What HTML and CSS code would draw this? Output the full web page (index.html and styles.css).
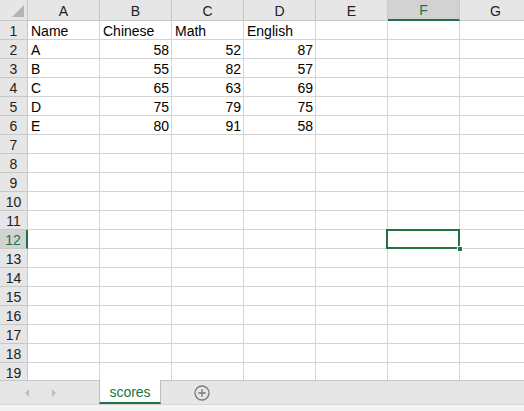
FILE: index.html
```html
<!DOCTYPE html>
<html>
<head>
<meta charset="utf-8">
<link rel="stylesheet" href="styles.css">
</head>
<body>
<div class="app">
  <div class="sheet">
    <div class="grid">
      <div class="corner"><span class="tri"></span></div>
      <div class="ch">A</div><div class="ch">B</div><div class="ch">C</div><div class="ch">D</div><div class="ch">E</div><div class="ch sel">F</div><div class="ch">G</div>

      <div class="rh">1</div><div class="c">Name</div><div class="c">Chinese</div><div class="c">Math</div><div class="c">English</div><div class="c"></div><div class="c"></div><div class="c"></div>
      <div class="rh">2</div><div class="c">A</div><div class="c n">58</div><div class="c n">52</div><div class="c n">87</div><div class="c"></div><div class="c"></div><div class="c"></div>
      <div class="rh">3</div><div class="c">B</div><div class="c n">55</div><div class="c n">82</div><div class="c n">57</div><div class="c"></div><div class="c"></div><div class="c"></div>
      <div class="rh">4</div><div class="c">C</div><div class="c n">65</div><div class="c n">63</div><div class="c n">69</div><div class="c"></div><div class="c"></div><div class="c"></div>
      <div class="rh">5</div><div class="c">D</div><div class="c n">75</div><div class="c n">79</div><div class="c n">75</div><div class="c"></div><div class="c"></div><div class="c"></div>
      <div class="rh">6</div><div class="c">E</div><div class="c n">80</div><div class="c n">91</div><div class="c n">58</div><div class="c"></div><div class="c"></div><div class="c"></div>
      <div class="rh">7</div><div class="c"></div><div class="c"></div><div class="c"></div><div class="c"></div><div class="c"></div><div class="c"></div><div class="c"></div>
      <div class="rh">8</div><div class="c"></div><div class="c"></div><div class="c"></div><div class="c"></div><div class="c"></div><div class="c"></div><div class="c"></div>
      <div class="rh">9</div><div class="c"></div><div class="c"></div><div class="c"></div><div class="c"></div><div class="c"></div><div class="c"></div><div class="c"></div>
      <div class="rh">10</div><div class="c"></div><div class="c"></div><div class="c"></div><div class="c"></div><div class="c"></div><div class="c"></div><div class="c"></div>
      <div class="rh">11</div><div class="c"></div><div class="c"></div><div class="c"></div><div class="c"></div><div class="c"></div><div class="c"></div><div class="c"></div>
      <div class="rh sel">12</div><div class="c"></div><div class="c"></div><div class="c"></div><div class="c"></div><div class="c"></div><div class="c active"><span class="handle"></span></div><div class="c"></div>
      <div class="rh">13</div><div class="c"></div><div class="c"></div><div class="c"></div><div class="c"></div><div class="c"></div><div class="c"></div><div class="c"></div>
      <div class="rh">14</div><div class="c"></div><div class="c"></div><div class="c"></div><div class="c"></div><div class="c"></div><div class="c"></div><div class="c"></div>
      <div class="rh">15</div><div class="c"></div><div class="c"></div><div class="c"></div><div class="c"></div><div class="c"></div><div class="c"></div><div class="c"></div>
      <div class="rh">16</div><div class="c"></div><div class="c"></div><div class="c"></div><div class="c"></div><div class="c"></div><div class="c"></div><div class="c"></div>
      <div class="rh">17</div><div class="c"></div><div class="c"></div><div class="c"></div><div class="c"></div><div class="c"></div><div class="c"></div><div class="c"></div>
      <div class="rh">18</div><div class="c"></div><div class="c"></div><div class="c"></div><div class="c"></div><div class="c"></div><div class="c"></div><div class="c"></div>
      <div class="rh">19</div><div class="c"></div><div class="c"></div><div class="c"></div><div class="c"></div><div class="c"></div><div class="c"></div><div class="c"></div>
    </div>
  </div>
  <div class="tabbar">
    <div class="navs">
      <span class="arrow left"></span>
      <span class="arrow right"></span>
    </div>
    <div class="tab">scores</div>
    <div class="add">
      <svg width="16" height="16" viewBox="0 0 16 16"><circle cx="8" cy="8" r="7" fill="none" stroke="#7a7a7a" stroke-width="1.3"/><path d="M8 4.2v7.6M4.2 8h7.6" stroke="#7a7a7a" stroke-width="1.4"/></svg>
    </div>
  </div>
  <div class="bottom"></div>
</div>
</body>
</html>
```

FILE: styles.css
```css
* { box-sizing: border-box; }
html, body { margin: 0; padding: 0; background: #fff; }
body { font-family: "Liberation Sans", Arial, sans-serif; }
.app { width: 524px; height: 411px; display: flex; flex-direction: column; overflow: hidden; }
.sheet { height: 380px; overflow: hidden; flex: none; }
.grid {
  display: grid;
  grid-template-columns: 28px repeat(7, 72px);
  grid-template-rows: 21px repeat(19, 19px);
  width: 532px;
}
.corner { background: #e6e6e6; border-right: 1px solid #c8c8c8; border-bottom: 1px solid #c8c8c8; position: relative; }
.tri { position: absolute; right: 3px; bottom: 3px; width: 0; height: 0; border-left: 12px solid transparent; border-bottom: 12px solid #b4b4b4; }
.ch {
  background: #e6e6e6; border-right: 1px solid #c8c8c8; border-bottom: 1px solid #c8c8c8;
  display: flex; align-items: center; justify-content: center;
  font-size: 14px; color: #222; padding-top: 1px;
}
.ch.sel { background: #d2d2d2; border-bottom: 2px solid #217346; color: #217346; }
.rh {
  background: #e6e6e6; border-right: 1px solid #c8c8c8; border-bottom: 1px solid #c8c8c8;
  display: flex; align-items: center; justify-content: center;
  font-size: 14px; color: #222; padding-top: 2px;
}
.rh.sel { background: #d2d2d2; border-right: 2px solid #217346; color: #217346; }
.c {
  border-right: 1px solid #d4d4d4; border-bottom: 1px solid #d4d4d4;
  font-size: 14px; color: #000; padding: 2px 3px 0 3px;
  display: flex; align-items: center; white-space: nowrap;
}
.c.n { justify-content: flex-end; padding-right: 2px; }
.c.active { position: relative; }
.c.active::after {
  content: ""; position: absolute; left: -2px; top: -1px; right: -1px; bottom: -1px;
  border: 2px solid #217346;
}
.handle { position: absolute; right: -4px; bottom: -4px; width: 6px; height: 6px; background: #217346; border: 1px solid #fff; z-index: 2; }
.tabbar {
  height: 24px; flex: none; background: #e6e6e6; border-top: 1px solid #c6c6c6;
  display: flex; align-items: stretch;
}
.navs { width: 99px; display: flex; align-items: center; padding-left: 25px; gap: 23px; }
.arrow { width: 0; height: 0; border-top: 4px solid transparent; border-bottom: 4px solid transparent; }
.arrow.left { border-right: 4px solid #bdbdbd; }
.arrow.right { border-left: 4px solid #bdbdbd; }
.tab {
  width: 62px; background: #fff; border-left: 1px solid #bcbcbc; border-right: 1px solid #bcbcbc;
  border-bottom: 2px solid #217346; margin-top: -1px;
  display: flex; align-items: center; justify-content: center;
  color: #217346; font-size: 14px; padding-top: 1px;
}
.add { display: flex; align-items: center; padding-left: 33px; }
.add svg { display: block; }
.bottom { flex: 1; background: #f3f3f3; border-top: 1px solid #d6d6d6; }
```
